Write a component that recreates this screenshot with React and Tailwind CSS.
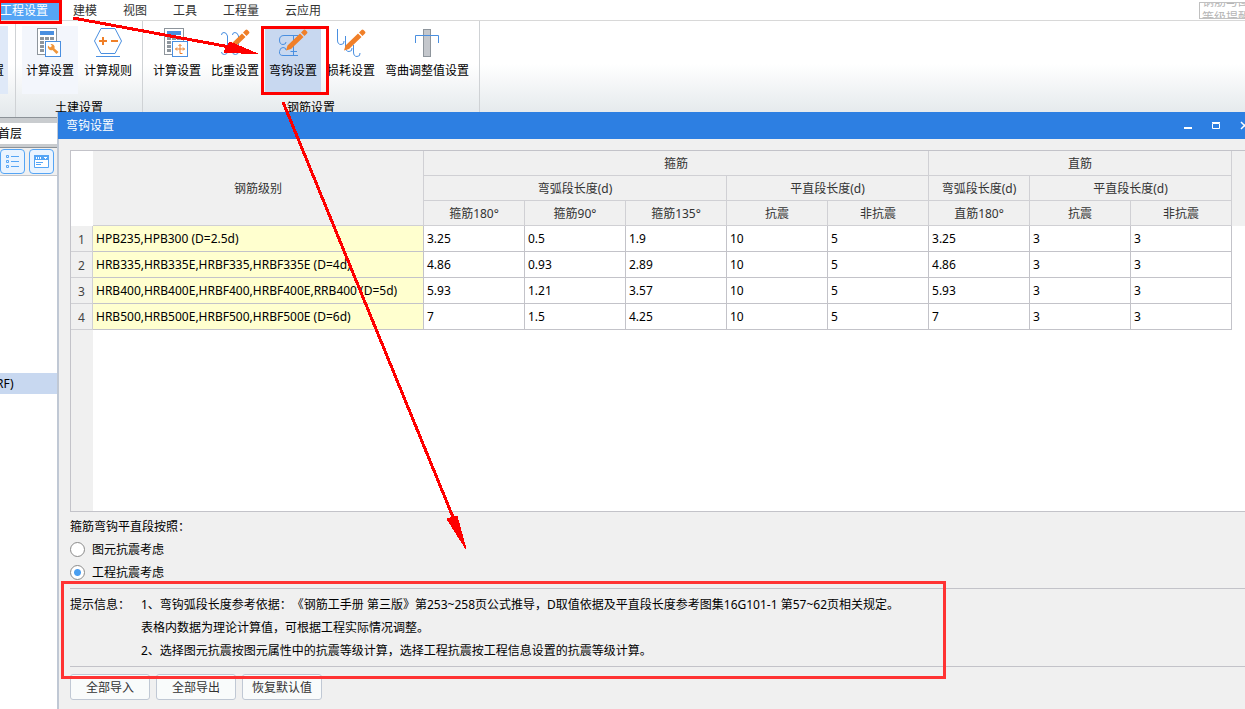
import React, { useState } from 'react'

const tabs = ['建模', '视图', '工具', '工程量', '云应用']

const rows = [
  ['HPB235,HPB300 (D=2.5d)', '3.25', '0.5', '1.9', '10', '5', '3.25', '3', '3'],
  ['HRB335,HRB335E,HRBF335,HRBF335E (D=4d)', '4.86', '0.93', '2.89', '10', '5', '4.86', '3', '3'],
  ['HRB400,HRB400E,HRBF400,HRBF400E,RRB400 (D=5d)', '5.93', '1.21', '3.57', '10', '5', '5.93', '3', '3'],
  ['HRB500,HRB500E,HRBF500,HRBF500E (D=6d)', '7', '1.5', '4.25', '10', '5', '7', '3', '3'],
]

const Pencil = () => (
  <path d="M8 23.500 9.500 18.500 22 6.500 25.500 10 13 22ZM23 5.500 25.500 3Q26.500 2 27.500 3L29 4.500Q30 5.500 29 6.500L26.500 9Z" fill="#f07f28" />
)

const Calculator = () => (
  <>
    <rect x="2.500" y="1.500" width="19" height="26" fill="#fff" stroke="#8e959c" />
    <rect x="5" y="4" width="14" height="4" fill="#4a8fe0" />
    <path d="M5 10h4v3H5zM10 10h4v3h-4zM15 10h4v3h-4zM5 14h4v3H5zM5 18h4v3H5zM5 22h4v3H5z" fill="#8e959c" />
    <rect x="10.500" y="14.500" width="15" height="15" fill="#fff" stroke="#4a8fe0" />
  </>
)

const CalcWrenchIcon = () => (
  <svg width="30" height="30" className="block">
    <Calculator />
    <path d="M13 18.500a3.500 3.500 0 0 0 4.500 4.500L21.500 27 23.500 25 19.500 21.500a3.500 3.500 0 0 0-4-4.500L17 19 15 20.500Z" fill="#f0953a" />
  </svg>
)

const CalcMoveIcon = () => (
  <svg width="30" height="30" className="block">
    <Calculator />
    <path d="M18 17.500v9M13.500 22h9M16.500 19l1.500-1.500 1.500 1.500M15 20.500l-1.500 1.500 1.500 1.500M21 20.500l1.500 1.500-1.500 1.500M18 26.500h2.500" fill="none" stroke="#f07f28" />
  </svg>
)

const RuleIcon = () => (
  <svg width="30" height="30" className="block">
    <path d="M8 1.500H22L28.500 14 22 26.500H8L1.500 14Z" fill="#fff" stroke="#4a8fe0" />
    <path d="M6 14h8M10 10v8M18 14h7" stroke="#f07f28" strokeWidth="2" />
    <path d="M3 29.500h24" stroke="#4a8fe0" />
  </svg>
)

const RatioIcon = () => (
  <svg width="30" height="30" className="block">
    <path d="M1.500 8Q1.500 5.500 4 5.500T7.500 9V24Q7.500 27.500 4.500 27.500T1.500 25M12.500 8Q12.500 5.500 15 5.500T18.500 9V24Q18.500 27.500 15.500 27.500T12.500 25" fill="none" stroke="#4a8fe0" />
    <Pencil />
  </svg>
)

const HookIcon = () => (
  <svg width="30" height="30" className="block">
    <path d="M20 8.500H6Q1.500 8.500 1.500 13T5 17.500Q8 17.500 8 15M8 23Q8 20.500 5 20.500T1.500 24.500 5 28.500H20M15.500 8.500V28.500M12.500 24.500H19" fill="none" stroke="#4a8fe0" />
    <Pencil />
  </svg>
)

const LossIcon = () => (
  <svg width="30" height="30" className="block">
    <path d="M1.500 2V13Q1.500 17.500 5 17.500T8 14M9.500 9V20Q9.500 24.500 13 24.500T16 21M17.500 18V25Q17.500 29.500 21 29.500T24 26" fill="none" stroke="#4a8fe0" />
    <Pencil />
  </svg>
)

const BendIcon = () => (
  <svg width="30" height="30" className="block">
    <rect x="11.500" y="2.500" width="7" height="27" fill="#c4c7cc" stroke="#8e959c" />
    <path d="M3.500 16V8.500H26.500V16" fill="none" stroke="#4a8fe0" />
  </svg>
)

const ToolButton = ({ icon, label, active, hover }) => (
  <button className={`flex h-17 flex-col items-center whitespace-nowrap px-1 pt-px ${active ? 'bg-[#c8d8f0]' : ''} ${hover ? 'bg-[#f3f6fc]' : ''}`}>
    {icon}
    <span className="mt-1 leading-5">{label}</span>
  </button>
)

const Group = ({ title, children }) => (
  <div className="flex flex-col items-center border-r border-[#cfd2d5] px-[6px] pt-[5px]">
    <div className="flex gap-[2px]">{children}</div>
    <div className="mt-1 leading-5">{title}</div>
  </div>
)

const Ribbon = () => (
  <header>
    <nav className="flex h-[21px] items-center justify-between border-b border-[#d8d8d8] bg-white text-[#333]">
      <div className="flex items-center">
        <button className="h-5 w-[60px] bg-[#55a5f5] pt-[2px] pr-3 text-white">工程设置</button>
        <div className="flex gap-[26px] pl-[13px]">
          {tabs.map(t => <button key={t} className="pt-[2px]">{t}</button>)}
        </div>
      </div>
      <div className="h-[17px] w-[46px] overflow-hidden border border-r-0 border-[#c0c0c0] pl-[2px] text-[#b5b5b5]">
        <div className="-mt-2 h-[14px] leading-[14px] whitespace-nowrap">钢筋与图</div>
        <div className="h-[14px] leading-[18px] whitespace-nowrap">等级提醒</div>
      </div>
    </nav>
    <div className="flex h-24 overflow-hidden bg-linear-to-b from-white from-45% to-[#e3e8eb]">
      <div className="w-4 border-r border-[#cfd2d5] pt-[5px]">
        <div className="flex h-17 w-2 justify-end overflow-hidden bg-[#dfe9f8] pt-[35px] pr-1 leading-5">置</div>
      </div>
      <Group title="土建设置">
        <ToolButton icon={<CalcWrenchIcon />} label="计算设置" hover />
        <ToolButton icon={<RuleIcon />} label="计算规则" />
      </Group>
      <Group title="钢筋设置">
        <ToolButton icon={<CalcMoveIcon />} label="计算设置" />
        <ToolButton icon={<RatioIcon />} label="比重设置" />
        <ToolButton icon={<HookIcon />} label="弯钩设置" active />
        <ToolButton icon={<LossIcon />} label="损耗设置" />
        <ToolButton icon={<BendIcon />} label="弯曲调整值设置" />
      </Group>
    </div>
  </header>
)

const Sidebar = () => (
  <aside className="flex w-[57px] shrink-0 flex-col bg-white">
    <div className="h-[6px] border-t border-[#8c9298] bg-[#c9cccf]" />
    <div className="h-[21px] -indent-[2px] leading-[21px]">首层</div>
    <div className="h-1 border-b border-[#8c9298] bg-[#c9cccf]" />
    <div className="flex h-7 items-center gap-1 border-b border-[#c4c7cc] bg-[#f0f0f0]">
      <button aria-label="列表" className="flex size-[25px] items-center justify-center rounded border border-[#55a5f5] bg-[#eaf4ff]">
        <svg width="15" height="15" fill="none" stroke="#55a5f5">
          <path d="M1.500 1.500h2v2h-2zM1.500 6.500h2v2h-2zM1.500 11.500h2v2h-2zM6 2.500h8M6 7.500h8M6 12.500h8" />
        </svg>
      </button>
      <button aria-label="窗口" className="flex size-[25px] items-center justify-center rounded border border-[#55a5f5] bg-[#eaf4ff]">
        <svg width="15" height="13">
          <path d="M.5.5h14v12H.5z" fill="#fff" stroke="#55a5f5" />
          <path d="M0 0h15v5H0z" fill="#55a5f5" />
          <path d="M2.500 2v2M4.500 2v2M6.500 2v2M10 2.500h3M11.500 2v2" stroke="#fff" />
          <path d="M2 7.500h7M2 9.500h5" stroke="#55a5f5" />
        </svg>
      </button>
    </div>
    <div className="mt-[197px] h-[21px] -indent-[4px] bg-[#c8d8f0] leading-[21px]">RF)</div>
  </aside>
)

const Th = ({ children, ...props }) => (
  <th className="h-[25px] border-r border-b border-[#d0d0d4] bg-[#f0f0f0] pt-[2px] font-normal text-[#333]" {...props}>{children}</th>
)

const HookTable = () => (
  <div className="flex flex-1 flex-col border-t border-b border-l border-[#c3c3c9] bg-white">
    <table className="w-full table-fixed border-separate border-spacing-0">
      <colgroup>
        <col className="w-[22px]" />
        <col className="w-[331px]" />
        {rows[0].slice(1).map((_, i) => <col key={i} className="w-[101px]" />)}
        <col />
      </colgroup>
      <thead>
        <tr>
          <td rowSpan={3} />
          <Th rowSpan={3}>钢筋级别</Th>
          <Th colSpan={5}>箍筋</Th>
          <Th colSpan={3}>直筋</Th>
          <td rowSpan={3} className="bg-[#f0f0f0]" />
        </tr>
        <tr>
          <Th colSpan={3}>弯弧段长度(d)</Th>
          <Th colSpan={2}>平直段长度(d)</Th>
          <Th>弯弧段长度(d)</Th>
          <Th colSpan={2}>平直段长度(d)</Th>
        </tr>
        <tr>
          {['箍筋180°', '箍筋90°', '箍筋135°', '抗震', '非抗震', '直筋180°', '抗震', '非抗震'].map((h, i) => <Th key={i}>{h}</Th>)}
        </tr>
      </thead>
      <tbody>
        {rows.map(([name, ...values], i) => (
          <tr key={name}>
            <th className="h-[26px] border-r border-b border-[#d0d0d4] bg-[#f0f0f0] pt-[2px] font-normal text-[#444]">{i + 1}</th>
            <td className="border-r border-b border-[#c3c3c9] bg-[#ffffcf] pl-[3px] whitespace-nowrap">{name}</td>
            {values.map((v, j) => <td key={j} className="border-r border-b border-[#c3c3c9] pl-[3px]">{v}</td>)}
            <td />
          </tr>
        ))}
      </tbody>
    </table>
    <div className="w-[22px] flex-1 bg-[#f0f0f0]" />
  </div>
)

const RadioRow = ({ label, checked, onChange }) => (
  <label className="flex h-[23px] items-center gap-[7px]">
    <input
      type="radio"
      name="seismic"
      checked={checked}
      onChange={onChange}
      className="size-[15px] appearance-none rounded-full border border-[#8a8a8a] bg-white checked:bg-radial checked:from-[#4a9ff0] checked:from-[3px] checked:to-white checked:to-[4px]"
    />
    {label}
  </label>
)

const Dialog = () => {
  const [mode, setMode] = useState('project')

  return (
    <section className="relative -mt-[5px] flex min-w-0 flex-1 flex-col border-l-2 border-[#c0c8d4] bg-[#f0f0f0]">
      <div className="-ml-px flex h-[27px] items-center justify-between bg-[#2d7fe2] pl-2 text-white">
        <h1>弯钩设置</h1>
        <div className="-mr-1 flex items-center gap-[19px]">
          <button aria-label="最小化"><svg width="9" height="9"><path d="M0 7h8" stroke="#fff" strokeWidth="2" /></svg></button>
          <button aria-label="最大化"><svg width="9" height="9"><path d="M.5 2.500h7v5h-7zM0 1.500h8" fill="none" stroke="#fff" /></svg></button>
          <button aria-label="关闭"><svg width="9" height="9"><path d="M1 1l7 7M8 1 1 8" stroke="#fff" strokeWidth="1.500" /></svg></button>
        </div>
      </div>
      <div className="flex flex-1 flex-col pt-[11px] pb-[9px] pl-[11px]">
        <HookTable />
        <div role="radiogroup" aria-labelledby="seismic-label" className="pt-[3px] pb-1">
          <p id="seismic-label" className="leading-[23px]">箍筋弯钩平直段按照：</p>
          <RadioRow label="图元抗震考虑" checked={mode === 'element'} onChange={() => setMode('element')} />
          <RadioRow label="工程抗震考虑" checked={mode === 'project'} onChange={() => setMode('project')} />
        </div>
        <div className="flex border-y border-[#c3c3c9] py-1 leading-[23px]">
          <p className="w-[71px] shrink-0">提示信息：</p>
          <div>
            <p>1、弯钩弧段长度参考依据：《钢筋工手册 第三版》第253~258页公式推导，D取值依据及平直段长度参考图集16G101-1 第57~62页相关规定。</p>
            <p>表格内数据为理论计算值，可根据工程实际情况调整。</p>
            <p>2、选择图元抗震按图元属性中的抗震等级计算，选择工程抗震按工程信息设置的抗震等级计算。</p>
          </div>
        </div>
        <div className="mt-[7px] flex gap-[6px]">
          {['全部导入', '全部导出', '恢复默认值'].map(b => (
            <button key={b} className="h-[26px] w-20 rounded-[3px] border border-[#c0c8d4] bg-[#f9fbfb] pt-[2px] text-[#333]">{b}</button>
          ))}
        </div>
      </div>
    </section>
  )
}

// red call-outs drawn over the window
const Annotations = () => (
  <div className="pointer-events-none absolute inset-0 overflow-hidden">
    <div className="absolute top-0 left-0 h-6 w-[62px] border-3 border-l-1 border-[#fe0000]" />
    <div className="absolute top-[26px] left-[261px] h-[69px] w-[68px] border-3 border-[#fe0000]" />
    <div className="absolute top-[581px] left-[61px] h-[98px] w-[885px] border-3 border-[#ff3333]" />
    <svg className="absolute inset-0 size-full" fill="#fe0000" stroke="#fe0000" shapeRendering="crispEdges">
      <path d="M73 18 230 47M283 102 455 522" strokeWidth="3" />
      <path d="M230 42 258 54 224 52ZM447 519 457 516 466 549Z" />
    </svg>
  </div>
)

const App = () => (
  <div className="relative flex min-h-screen flex-col overflow-hidden bg-white font-['Noto_Sans','Noto_Sans_CJK_SC',sans-serif] text-[12px] leading-4 text-black [text-spacing-trim:space-all]">
    <Ribbon />
    <div className="flex flex-1">
      <Sidebar />
      <Dialog />
    </div>
    <Annotations />
  </div>
)

export default App
